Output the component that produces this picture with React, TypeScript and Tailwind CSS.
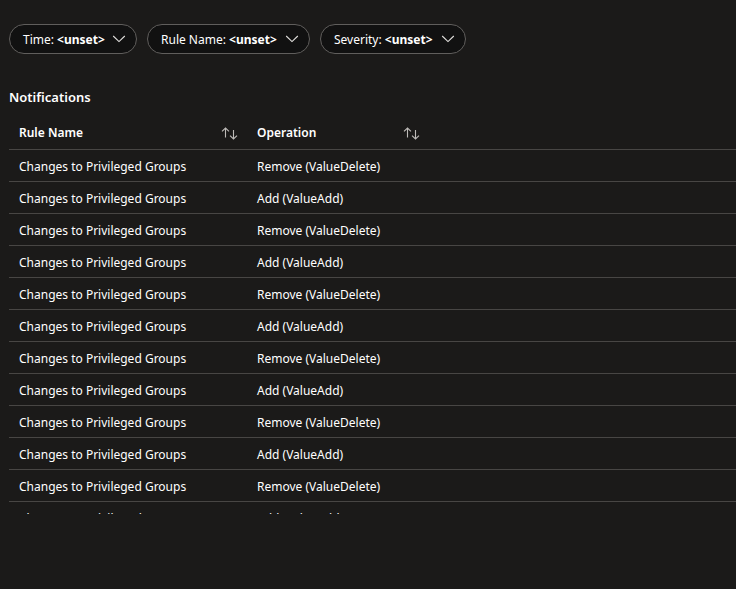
import React from "react";

type Filter = { label: string; width: string };

const filters: Filter[] = [
  { label: "Time", width: "w-[128px]" },
  { label: "Rule Name", width: "w-[163px]" },
  { label: "Severity", width: "w-[146px]" },
];

const columns = ["Rule Name", "Operation"];

const rows = Array.from({ length: 12 }, (_, i) => ({
  rule: "Changes to Privileged Groups",
  operation: i % 2 === 0 ? "Remove (ValueDelete)" : "Add (ValueAdd)",
}));

function ChevronDown() {
  return (
    <svg width="14" height="8" viewBox="0 0 14 8" fill="none" stroke="#e1dfdd" strokeWidth="1.1" aria-hidden="true">
      <path d="M1.2 1 L7 6.6 L12.8 1" />
    </svg>
  );
}

function SortIcon() {
  return (
    <svg width="18" height="14" viewBox="0 0 18 14" fill="none" stroke="#bebbb8" strokeWidth="1.1" aria-hidden="true">
      <path d="M5.5 11.5V2M2 5.4L5.5 2L9 5.4" />
      <path d="M13.5 4V13M10 9.6L13.5 13L17 9.6" />
    </svg>
  );
}

export default function App() {
  return (
    <main className="min-h-screen overflow-hidden bg-[#1b1a19] pt-6 pl-[9px] font-['Noto_Sans','Open_Sans',sans-serif] text-xs leading-5 text-white">
      <div className="flex flex-wrap gap-[10px]">
        {filters.map((f) => (
          <button
            key={f.label}
            type="button"
            className={`flex h-[30px] items-center justify-between rounded-full border border-[#605e5c] bg-[#111111] pr-[10px] pl-[13px] whitespace-nowrap ${f.width}`}
          >
            <span className="pt-0.5">
              {f.label}: <span className="font-bold">&lt;unset&gt;</span>
            </span>
            <ChevronDown />
          </button>
        ))}
      </div>
      <section className="pt-[33px]">
        <h2 className="text-[13px] leading-5 font-semibold">Notifications</h2>
        <div className="mt-2 max-h-[399px] overflow-hidden">
          <table className="w-full table-fixed border-separate border-spacing-0">
            <colgroup>
              <col className="w-[238px]" />
              <col className="w-[182px]" />
              <col />
            </colgroup>
            <thead>
              <tr className="h-[35px]">
                {columns.map((c) => (
                  <th key={c} scope="col" className="border-b border-[#484644] pt-0.5 pr-[9px] pl-[10px] text-left font-semibold">
                    <div className="flex items-center justify-between">
                      <span>{c}</span>
                      <button type="button" aria-label={`Sort by ${c}`}>
                        <SortIcon />
                      </button>
                    </div>
                  </th>
                ))}
                <td className="border-b border-[#484644]" />
              </tr>
            </thead>
            <tbody>
              {rows.map((r, i) => (
                <tr key={i} className="h-8 whitespace-nowrap">
                  <td className="border-b border-[#484644] pt-0.5 pl-[10px]">{r.rule}</td>
                  <td className="border-b border-[#484644] pt-0.5 pl-[10px]">{r.operation}</td>
                  <td className="border-b border-[#484644]" />
                </tr>
              ))}
            </tbody>
          </table>
        </div>
      </section>
    </main>
  );
}
